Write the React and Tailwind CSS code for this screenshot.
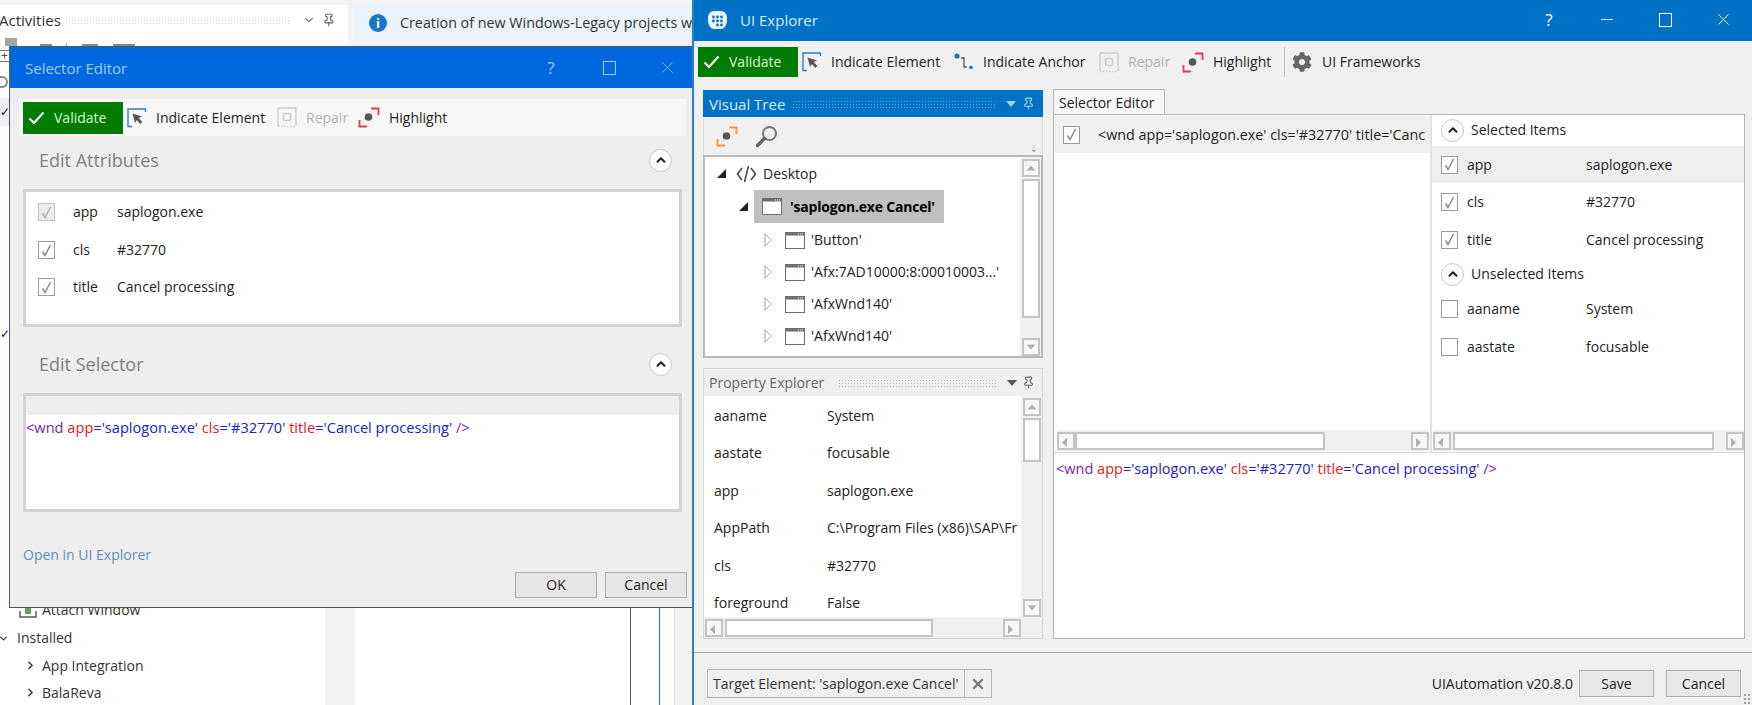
import React from "react";
import { ChevronDown, ChevronRight, ChevronUp, Pin, X } from "lucide-react";
import { FaCog } from "react-icons/fa";

const IndicateIcon = () => (
  <svg width="20" height="20" viewBox="0 0 20 20" fill="none" className="shrink-0">
    <path d="M5 18.5H1V1h17.5v3" stroke="#2b7fc0" strokeWidth="1.4" />
    <path d="M5.5 5.5l9.5 3-3.2 1.6 3.5 4-2 1.8-3.5-4-1.7 3.2z" fill="#555" />
  </svg>
);

const AnchorIcon = () => (
  <svg width="20" height="20" viewBox="0 0 20 20" fill="none" className="shrink-0">
    <circle cx="3" cy="4" r="2.6" fill="#1b75bc" />
    <path d="M7 6h3v9h3" stroke="#555" strokeWidth="1.3" />
    <circle cx="17" cy="15.5" r="1.8" fill="#1b75bc" />
  </svg>
);

const RepairIcon = () => (
  <svg width="20" height="21" viewBox="0 0 20 21" fill="none" className="shrink-0">
    <path d="M1 19V2.5A1.5 1.5 0 0 1 2.5 1H19v18" stroke="#c9cdcf" strokeWidth="1.3" />
    <path d="M1 19.5h18" stroke="#c9cdcf" strokeWidth="1.3" strokeDasharray="1.5 1.5" />
    <rect x="6.5" y="6.5" width="7" height="7" rx="1.5" stroke="#c9cdcf" strokeWidth="1.6" />
  </svg>
);

const HighlightIcon = ({ color = "#e8384f" }) => (
  <svg width="22" height="21" viewBox="0 0 22 21" fill="none" className="shrink-0">
    <path d="M13 1.5h7.5V8" stroke={color} strokeWidth="1.8" />
    <path d="M1.5 13v6.5H9" stroke={color} strokeWidth="1.8" />
    <circle cx="10.5" cy="10" r="3.8" fill="#555" />
  </svg>
);

const SearchIcon = () => (
  <svg width="23" height="23" viewBox="0 0 23 23" fill="none" className="shrink-0">
    <circle cx="14.5" cy="8.5" r="6.5" stroke="#777" strokeWidth="2" />
    <path d="M9.5 13.5L2.5 20.5" stroke="#666" strokeWidth="3.4" strokeLinecap="round" />
  </svg>
);

const CodeIcon = () => (
  <svg width="21" height="18" viewBox="0 0 21 18" fill="none" className="shrink-0">
    <path d="M6 3L1.5 9 6 15M15 3l4.5 6-4.5 6M12.5 1L8.5 17" stroke="#444" strokeWidth="1.5" />
  </svg>
);

const WindowIcon = () => (
  <svg width="20" height="17" viewBox="0 0 20 17" fill="none" className="shrink-0">
    <rect x="0.5" y="0.5" width="19" height="16" fill="#fff" stroke="#6d6d6d" />
    <rect x="0.5" y="0.5" width="19" height="3" fill="#6d6d6d" />
    <path d="M13 2h1M15 2h1M17 2h1" stroke="#fff" strokeWidth="1" />
  </svg>
);

const Logo = () => (
  <svg width="21" height="20" viewBox="0 0 21 20" className="shrink-0">
    <path d="M7 1h7c3.500 0 6 3 6 6.500v3c0 4-2.500 8.500-6 8.500H7c-3.500 0-6-4.500-6-8.500v-3C1 4 3.500 1 7 1z" fill="#eaf3fb" />
    <g fill="#0072c6">
      <circle cx="6.500" cy="7" r="1.400" />
      <circle cx="10.500" cy="7" r="1.400" />
      <circle cx="14.500" cy="7" r="1.400" />
      <circle cx="6.500" cy="11" r="1.400" />
      <circle cx="10.500" cy="11" r="1.400" />
      <circle cx="14.500" cy="11" r="1.400" />
      <circle cx="10.500" cy="15" r="1.400" />
      <circle cx="14.500" cy="15" r="1.400" />
    </g>
  </svg>
);

const AttachIcon = () => (
  <svg width="18" height="18" viewBox="0 0 18 18" fill="none" className="shrink-0">
    <path d="M9 1l6 6h-3v6H6V7H3z" fill="#5ea44a" />
    <path d="M1 10v6h16v-6" stroke="#555" strokeWidth="1.4" />
  </svg>
);

const Tick = ({ color = "#8a8a8a" }) => (
  <svg width="11" height="13" viewBox="0 0 11 13" fill="none">
    <path d="M1.500 7.500L4 11.500 9.500 1" stroke={color} strokeWidth="1.500" />
  </svg>
);

const Checkbox = ({ checked = true, disabled = false, className = "" }) => (
  <span
    className={`flex h-[18px] w-[17px] shrink-0 items-center justify-center border ${
      disabled ? "border-[#c4c4c4] bg-[#ececec]" : "border-[#9a9a9a] bg-white"
    } ${className}`}
  >
    {checked && <Tick color={disabled ? "#b0b0b0" : "#8a8a8a"} />}
  </span>
);

const Collapse = ({ className = "" }) => (
  <span
    className={`flex h-[23px] w-[23px] shrink-0 items-center justify-center rounded-full border border-[#c6c6c6] bg-white ${className}`}
  >
    <ChevronUp size={14} strokeWidth={3.5} color="#222" />
  </span>
);

const Validate = ({ className = "" }) => (
  <div className={`flex w-[100px] shrink-0 items-center bg-[#007c00] pl-[5px] text-[#dcf7d2] ${className}`}>
    <svg width="17" height="14" viewBox="0 0 17 14" fill="none" className="shrink-0">
      <path d="M1.500 7.500L6 12 15.500 1.500" stroke="#fff" strokeWidth="2.200" />
    </svg>
    <span className="ml-[9px]">Validate</span>
  </div>
);

const ToolItem = ({ icon, children, disabled, textClass }) => (
  <div className={`flex shrink-0 items-center ${disabled ? "text-[#b4b4b4]" : "text-[#222]"}`}>
    {icon}
    <span className={`ml-[9px] whitespace-nowrap ${textClass}`}>{children}</span>
  </div>
);

const Arrow = ({ dir }) => {
  const points = {
    up: "0.500,6 5,1 9.500,6",
    down: "0.500,1 5,6 9.500,1",
    left: "6,0.500 1,5 6,9.500",
    right: "1,0.500 6,5 1,9.500",
  };
  return (
    <svg width="10" height="10" viewBox="0 0 10 7" className="overflow-visible">
      <polygon points={points[dir]} fill="#b0b0b0" />
    </svg>
  );
};

const ScrollBtn = ({ dir, className = "" }) => (
  <span className={`flex h-[18px] w-[18px] shrink-0 items-center justify-center border-2 border-[#c4c4c4] bg-[#f7f7f7] ${className}`}>
    <Arrow dir={dir} />
  </span>
);

const Thumb = ({ className = "" }) => <span className={`block border-2 border-[#c4c4c4] bg-white ${className}`} />;

const VScroll = ({ thumbClass, className = "" }) => (
  <div className={`flex w-[21px] shrink-0 flex-col items-center bg-[#f0f0f0] pt-[2px] ${className}`}>
    <ScrollBtn dir="up" />
    <Thumb className={`mt-[2px] w-[18px] ${thumbClass}`} />
    <span className="flex-1" />
    <ScrollBtn dir="down" />
  </div>
);

const HScroll = ({ thumbClass, className = "" }) => (
  <div className={`flex h-[21px] shrink-0 items-center bg-[#f0f0f0] ${className}`}>
    <ScrollBtn dir="left" />
    <Thumb className={`h-[18px] ${thumbClass}`} />
    <span className="flex-1" />
    <ScrollBtn dir="right" />
  </div>
);

const Selector = () => (
  <>
    <span className="text-[#7a1e9e]">&lt;wnd</span> <span className="text-[#e01b1b]">app</span>
    <span className="text-[#2020c8]">='saplogon.exe'</span> <span className="text-[#e01b1b]">cls</span>
    <span className="text-[#2020c8]">='#32770'</span> <span className="text-[#e01b1b]">title</span>
    <span className="text-[#2020c8]">='Cancel processing'</span> <span className="text-[#7a1e9e]">/&gt;</span>
  </>
);

const TreeRow = ({ label, className = "" }) => (
  <div className={`flex h-[32px] items-center pl-[59px] ${className}`}>
    <svg width="9" height="14" viewBox="0 0 9 14" fill="none" className="shrink-0">
      <path d="M1 1l6 6-6 6z" stroke="#a8a8a8" fill="#fff" />
    </svg>
    <span className="ml-[12px]">
      <WindowIcon />
    </span>
    <span className="ml-[6px] whitespace-nowrap">{label}</span>
  </div>
);

const Expanded = () => (
  <svg width="11" height="11" viewBox="0 0 11 11" className="shrink-0">
    <polygon points="10,1 10,10 1,10" fill="#222" />
  </svg>
);

const attributes = [
  { name: "app", value: "saplogon.exe", disabled: true, row: "mt-[5px]" },
  { name: "cls", value: "#32770", row: "mt-[18px]" },
  { name: "title", value: "Cancel processing", row: "mt-[17px]" },
];

const properties = [
  ["aaname", "System"],
  ["aastate", "focusable"],
  ["app", "saplogon.exe"],
  ["AppPath", "C:\\Program Files (x86)\\SAP\\Fr"],
  ["cls", "#32770"],
  ["foreground", "False"],
];

function SelectorDialog() {
  return (
    <div className="absolute left-[9px] top-[46px] flex h-[562px] w-[690px] flex-col border border-[#46586a] bg-[#eeeeee]">
      <div className="flex h-[41px] shrink-0 items-center bg-[#0067de] pl-[15px] text-[15px] text-[#9fcbf5]">
        <span>Selector Editor</span>
        <div className="ml-auto flex items-center">
          <span className="flex w-[58px] justify-center text-[17px]">?</span>
          <span className="flex w-[58px] justify-center">
            <span className="h-[14px] w-[13px] border border-[#9fcbf5]" />
          </span>
          <span className="flex w-[58px] justify-center">
            <X size={19} strokeWidth={1} />
          </span>
          <span className="w-[2px]" />
        </div>
      </div>

      <div className="ml-[9px] mt-[11px] flex h-[37px] w-[667px] items-center bg-[#f7f7f7] pl-[4px]">
        <Validate className="h-[32px]" />
        <div className="ml-[4px]">
          <ToolItem icon={<IndicateIcon />} textClass="w-[109px]">Indicate Element</ToolItem>
        </div>
        <div className="ml-[12px]">
          <ToolItem icon={<RepairIcon />} disabled textClass="w-[41px]">Repair</ToolItem>
        </div>
        <div className="ml-[11px]">
          <ToolItem icon={<HighlightIcon />} textClass="w-[61px]">Highlight</ToolItem>
        </div>
      </div>

      <div className="ml-[29px] mr-[12px] mt-[12px] flex h-[24px] items-center text-[18px] text-[#808080]">
        <span>Edit Attributes</span>
        <Collapse className="ml-auto mr-[14px]" />
      </div>

      <div className="ml-[13px] mt-[17px] h-[138px] w-[659px] border-[3px] border-[#d2d2d2] bg-white pl-[12px] pt-[5px]">
        {attributes.map((a) => (
          <div key={a.name} className={`flex items-center ${a.row}`}>
            <Checkbox disabled={a.disabled} />
            <span className="ml-[18px] w-[44px]">{a.name}</span>
            <span>{a.value}</span>
          </div>
        ))}
      </div>

      <div className="ml-[29px] mr-[12px] mt-[25px] flex h-[24px] items-center text-[18px] text-[#808080]">
        <span>Edit Selector</span>
        <Collapse className="ml-auto mr-[14px]" />
      </div>

      <div className="ml-[13px] mt-[17px] flex h-[119px] w-[659px] flex-col border-[3px] border-[#d2d2d2] bg-white">
        <div className="h-[19px] bg-[#eeeeee]" />
        <div className="mt-[2px] text-[14.6px]">
          <Selector />
        </div>
      </div>

      <div className="ml-[13px] mt-[33px] text-[#5b8fc4]">Open in UI Explorer</div>

      <div className="ml-[505px] mt-[7px] flex gap-[8px]">
        <button className="h-[26px] w-[82px] border border-[#adadad] bg-[#e6e6e6] text-[#222]">OK</button>
        <button className="h-[26px] w-[82px] border border-[#adadad] bg-[#e6e6e6] text-[#222]">Cancel</button>
      </div>
    </div>
  );
}

function VisualTree() {
  return (
    <div className="flex h-[268px] flex-col">
      <div className="flex h-[27px] shrink-0 items-center bg-[#0072c6] pl-[6px] pr-[8px] text-[15px] text-[#d7eafa]">
        <span className="w-[83px]">Visual Tree</span>
        <span className="h-[8px] w-[204px] bg-[radial-gradient(circle,#5ea6dc_0.7px,transparent_0.9px)] bg-[length:3px_3px]" />
        <svg width="10" height="6" viewBox="0 0 10 6" className="ml-[10px]">
          <polygon points="0,0 10,0 5,6" fill="#a9d2f0" />
        </svg>
        <Pin size={13} color="#a9d2f0" className="ml-auto" />
      </div>
      <div className="relative flex h-[38px] shrink-0 items-center gap-[17px] border-x border-[#dcdcdc] bg-[#f0f0f0] pl-[12px]">
        <HighlightIcon color="#ec9a3c" />
        <SearchIcon />
        <span className="absolute bottom-[2px] right-[4px] text-[9px] leading-none text-[#999]">⇣</span>
      </div>
      <div className="flex h-[203px] shrink-0 border-2 border-[#b9b9b9] bg-white">
        <div className="flex-1 overflow-hidden">
          <div className="flex h-[33px] items-center pl-[11px]">
            <Expanded />
            <span className="ml-[9px]">
              <CodeIcon />
            </span>
            <span className="ml-[6px]">Desktop</span>
          </div>
          <div className="flex h-[33px] items-center pl-[33px]">
            <Expanded />
            <div className="ml-[5px] flex h-[33px] w-[190px] items-center bg-[#bfbfbf] pl-[8px]">
              <WindowIcon />
              <span className="ml-[8px] whitespace-nowrap font-bold tracking-[-0.2px] text-black">'saplogon.exe Cancel'</span>
            </div>
          </div>
          <TreeRow label="'Button'" className="mt-[1px]" />
          <TreeRow label="'Afx:7AD10000:8:00010003...'" />
          <TreeRow label="'AfxWnd140'" />
          <TreeRow label="'AfxWnd140'" />
        </div>
        <VScroll thumbClass="h-[139px]" />
      </div>
    </div>
  );
}

function PropertyExplorer() {
  return (
    <div className="mt-[10px] flex h-[271px] flex-col border border-[#d4d4d4]">
      <div className="flex h-[27px] shrink-0 items-center bg-[#efefef] pl-[5px] pr-[7px] text-[#666]">
        <span className="w-[129px]">Property Explorer</span>
        <span className="h-[8px] w-[159px] bg-[radial-gradient(circle,#b8b8b8_0.7px,transparent_0.9px)] bg-[length:3px_3px]" />
        <svg width="10" height="6" viewBox="0 0 10 6" className="ml-[10px]">
          <polygon points="0,0 10,0 5,6" fill="#555" />
        </svg>
        <Pin size={13} color="#666" className="ml-auto" />
      </div>
      <div className="flex min-h-0 flex-1">
        <div className="w-[318px] bg-white">
          <div className="pt-[1px]">
            {properties.map(([k, v]) => (
              <div key={k} className="flex h-[37.5px] items-center overflow-hidden whitespace-nowrap pl-[10px]">
                <span className="w-[113px] shrink-0">{k}</span>
                <span>{v}</span>
              </div>
            ))}
          </div>
        </div>
        <VScroll thumbClass="h-[44px]" />
      </div>
      <HScroll thumbClass="ml-[2px] w-[208px]" className="pl-[1px] pr-[21px]" />
    </div>
  );
}

function SelectorPanel() {
  return (
    <div className="flex w-[692px] flex-col">
      <div className="flex h-[26px] w-[112px] items-center border-x border-t border-[#b5b5b5] bg-[#f7f7f7] pl-[5px]">
        Selector Editor
      </div>
      <div className="-mt-px flex h-[525px] flex-col border border-[#b5b5b5] bg-white">
        <div className="flex h-[337px] shrink-0">
          <div className="flex w-[376px] flex-col overflow-hidden">
            <div className="mt-[1px] flex h-[37px] items-center overflow-hidden whitespace-nowrap bg-[#f0f0f0] pl-[9px]">
              <Checkbox />
              <span className="ml-[18px] text-[14.3px]">&lt;wnd app='saplogon.exe' cls='#32770' title='Canc</span>
            </div>
            <div className="flex-1" />
            <HScroll thumbClass="w-[250px]" className="mb-px ml-[3px] mr-[1px]" />
          </div>
          <div className="w-[2px] bg-[#e2e2e2]" />
          <div className="flex flex-1 flex-col">
            <div className="flex h-[31px] items-center pb-[1px] pl-[9px]">
              <Collapse />
              <span className="ml-[7px]">Selected Items</span>
            </div>
            <div className="flex h-[37px] items-center bg-[#efefef] pl-[9px]">
              <Checkbox />
              <span className="ml-[9px] w-[119px]">app</span>
              <span>saplogon.exe</span>
            </div>
            <div className="flex h-[38px] items-center pl-[9px]">
              <Checkbox />
              <span className="ml-[9px] w-[119px]">cls</span>
              <span>#32770</span>
            </div>
            <div className="flex h-[37px] items-center pl-[9px]">
              <Checkbox />
              <span className="ml-[9px] w-[119px]">title</span>
              <span>Cancel processing</span>
            </div>
            <div className="flex h-[32px] items-center pl-[9px]">
              <Collapse />
              <span className="ml-[7px]">Unselected Items</span>
            </div>
            <div className="flex h-[38px] items-center pl-[9px]">
              <Checkbox checked={false} />
              <span className="ml-[9px] w-[119px]">aaname</span>
              <span>System</span>
            </div>
            <div className="flex h-[38px] items-center pl-[9px]">
              <Checkbox checked={false} />
              <span className="ml-[9px] w-[119px]">aastate</span>
              <span>focusable</span>
            </div>
            <div className="flex-1" />
            <HScroll thumbClass="ml-[2px] w-[261px]" className="mb-px ml-[1px]" />
          </div>
        </div>
        <div className="border-t border-[#d4d4d4] pl-[2px] pt-[6px] text-[14.5px]">
          <Selector />
        </div>
      </div>
    </div>
  );
}

function UiExplorer() {
  return (
    <div className="absolute left-[692px] top-0 flex h-[705px] w-[1060px] flex-col border-l-2 border-[#2a7fc4] bg-[#f0f0f0]">
      <div className="flex h-[41px] shrink-0 items-center bg-[#0072c6] pb-[2px] pl-[13px] text-[15px] text-[#d7eafa]">
        <Logo />
        <span className="ml-[12px]">UI Explorer</span>
        <div className="ml-auto flex items-center text-white">
          <span className="flex w-[58px] justify-center text-[17px]">?</span>
          <span className="flex w-[58px] justify-center">
            <span className="h-px w-[12px] bg-white" />
          </span>
          <span className="flex w-[58px] justify-center">
            <span className="h-[14px] w-[13px] border border-white" />
          </span>
          <span className="flex w-[58px] justify-center">
            <X size={19} strokeWidth={1.2} />
          </span>
        </div>
      </div>

      <div className="flex h-[48px] shrink-0 items-start pl-[4px] pt-[6px]">
        <Validate className="h-[30px]" />
        <div className="ml-[4px] flex h-[30px] items-center">
          <ToolItem icon={<IndicateIcon />} textClass="w-[111px]">Indicate Element</ToolItem>
          <div className="ml-[12px]">
            <ToolItem icon={<AnchorIcon />} textClass="w-[104px]">Indicate Anchor</ToolItem>
          </div>
          <div className="ml-[12px]">
            <ToolItem icon={<RepairIcon />} disabled textClass="w-[43px]">Repair</ToolItem>
          </div>
          <div className="ml-[11px]">
            <ToolItem icon={<HighlightIcon />} textClass="w-[61px]">Highlight</ToolItem>
          </div>
          <span className="ml-[10px] h-[30px] w-px bg-[#c4c4c4]" />
          <FaCog size={20} color="#666" className="ml-[7px]" />
          <span className="ml-[10px] whitespace-nowrap text-[#222]">UI Frameworks</span>
        </div>
      </div>

      <div className="flex shrink-0 pl-[9px]">
        <div className="mt-[1px] w-[340px]">
          <VisualTree />
          <PropertyExplorer />
        </div>
        <div className="ml-[10px]">
          <SelectorPanel />
        </div>
      </div>

      <div className="mt-[13px] flex flex-1 items-start border-t border-[#a8a8a8] bg-[#efefef]">
        <div className="ml-[13px] mt-[16px] flex h-[29px] items-center border border-[#b4b4b4] text-[#333]">
          <span className="flex h-full w-[257px] items-center whitespace-nowrap border-r border-[#b4b4b4] pl-[5px]">
            Target Element: 'saplogon.exe Cancel'
          </span>
          <X size={16} strokeWidth={3.500} color="#777" className="mx-[5px]" />
        </div>
        <div className="ml-auto mr-[11px] mt-[17px] flex items-center text-[#222]">
          <span className="mr-[6px]">UIAutomation v20.8.0</span>
          <button className="h-[27px] w-[75px] border border-[#adadad] bg-[#e8e8e8]">Save</button>
          <button className="ml-[12px] h-[27px] w-[75px] border border-[#adadad] bg-[#e8e8e8]">Cancel</button>
        </div>
      </div>
      <span className="absolute bottom-0 right-[1px] h-[12px] w-[8px] bg-[radial-gradient(circle,#a0a0a0_0.9px,transparent_1.100px)] bg-[length:4px_4px]" />
    </div>
  );
}

function Studio() {
  return (
    <div className="flex h-[705px] w-[1752px]">
      <div className="flex w-[348px] shrink-0 flex-col pt-[5px]">
        <div className="flex flex-1 flex-col bg-white">
          <div className="flex h-[30px] shrink-0 items-center overflow-hidden pr-[12px] text-[15px] text-[#333]">
            <span className="w-[65px] shrink-0 -translate-x-px">Activities</span>
            <span className="h-[8px] w-[228px] bg-[radial-gradient(circle,#d0d0d0_0.7px,transparent_0.9px)] bg-[length:3px_3px]" />
            <ChevronDown size={14} color="#666" className="ml-[13px]" />
            <Pin size={14} color="#666" className="ml-[7px]" />
          </div>
          <div className="mt-[3px] flex h-[8px] shrink-0 items-end pl-[5px]">
            <span className="h-[8px] w-[12px] bg-[#a4a4a4]" />
            <span className="ml-[23px] h-[2px] w-[12px] bg-[#888]" />
            <span className="ml-[14px] h-[3px] w-px bg-[#aaa]" />
            <span className="ml-[15px] h-[2px] w-[16px] bg-[#888]" />
            <span className="ml-[15px] h-[2px] w-[22px] bg-[#888]" />
          </div>
          <div className="mt-[4px] flex h-[12px] w-[10px] items-center justify-center border border-l-0 border-[#777] text-[12px] leading-none text-[#444]">+</div>
          <div className="mt-[14px] h-[12px] w-[8px] rounded-r-full border-2 border-l-0 border-[#888]" />
          <div className="mt-[10px] flex h-[28px] w-[10px] items-center bg-[#eeeeee] text-[12px] text-[#222]">✓</div>
          <div className="mt-[202px] h-[16px] text-[12px] leading-none text-[#222]">✓</div>
          <div className="mt-auto flex h-[108px] shrink-0">
            <div className="w-[326px] pt-[1px] text-[#333]">
              <div className="flex h-[27px] items-center pb-[3px] pl-[19px]">
                <AttachIcon />
                <span className="ml-[5px]">Attach Window</span>
              </div>
              <div className="flex h-[27px] items-center pb-[1px]">
                <ChevronDown size={11} strokeWidth={2.500} className="-ml-[2px]" />
                <span className="ml-[8px]">Installed</span>
              </div>
              <div className="flex h-[27px] items-center pl-[24px]">
                <ChevronRight size={13} strokeWidth={2.500} />
                <span className="ml-[5px]">App Integration</span>
              </div>
              <div className="flex h-[27px] items-center pl-[24px]">
                <ChevronRight size={13} strokeWidth={2.500} />
                <span className="ml-[5px]">BalaReva</span>
              </div>
            </div>
            <div className="w-[22px] border-l border-[#ececec] bg-[#f3f3f3]" />
          </div>
        </div>
      </div>
      <div className="flex flex-1 flex-col pt-[5px]">
        <div className="ml-[7px] flex h-[36px] w-[337px] shrink-0 items-center overflow-hidden bg-[#eaf2fb] pl-[14px] text-[14.3px] text-[#333]">
          <span className="flex h-[18px] w-[18px] shrink-0 items-center justify-center rounded-full bg-[#1a75c9] text-[13px] font-bold leading-none text-white">i</span>
          <span className="ml-[13px] whitespace-nowrap">Creation of new Windows-Legacy projects w</span>
        </div>
        <div className="mt-auto flex h-[97px] shrink-0 pl-[7px]">
          <div className="w-[275px] bg-white" />
          <span className="w-px bg-[#555]" />
          <div className="w-[28px] bg-white" />
          <span className="w-px bg-[#1a6fc4]" />
          <div className="w-[14px] bg-white" />
          <span className="w-px bg-[#d8d8d8]" />
        </div>
      </div>
    </div>
  );
}

export default function App() {
  return (
    <div className="relative h-[705px] w-[1752px] overflow-hidden bg-[#f3f3f3] font-['Open_Sans',sans-serif] text-[14px] leading-[20px] text-[#222]">
      <Studio />
      <SelectorDialog />
      <UiExplorer />
    </div>
  );
}
